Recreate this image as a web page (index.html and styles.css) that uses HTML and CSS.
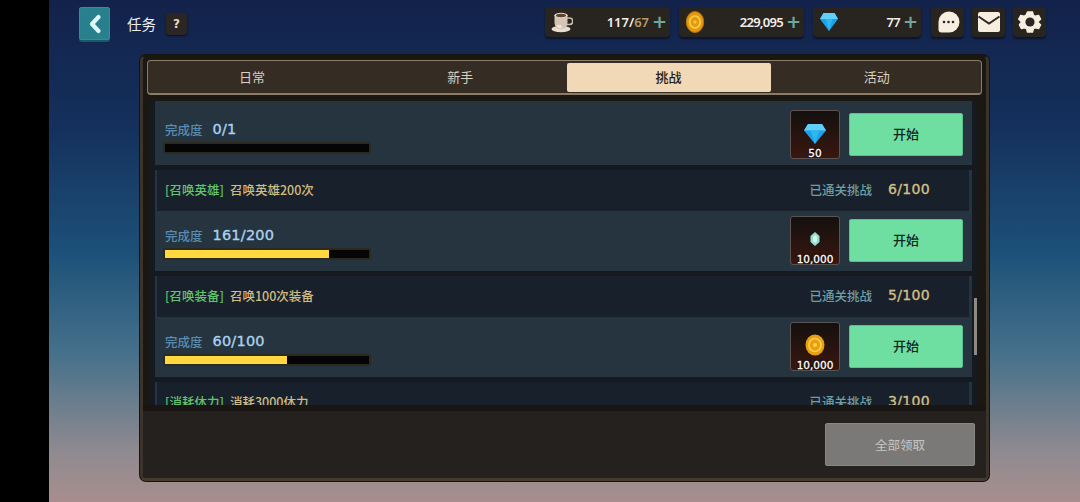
FILE: index.html
```html
<!DOCTYPE html>
<html lang="zh">
<head>
<meta charset="utf-8">
<title>任务</title>
<link rel="stylesheet" href="styles.css">
</head>
<body>
<div class="screen">
  <header class="top">
    <button class="back"><svg width="16" height="20" viewBox="0 0 16 20"><path d="M11.500 3 5 10l6.500 7" fill="none" stroke="#dff7f7" stroke-width="4.200" stroke-linecap="round" stroke-linejoin="round"/></svg></button>
    <span class="title">任务</span>
    <span class="help">?</span>
    <div class="spacer"></div>
    <div class="res res-a">
      <svg class="res-ic" width="22" height="22" viewBox="0 0 22 22"><ellipse cx="10" cy="18" rx="9.500" ry="3.200" fill="#e6dcd0"/><path d="M16 7h2.500a2.500 2.500 0 0 1 0 6.500H15" fill="none" stroke="#cbbcae" stroke-width="1.600"/><path d="M3.500 4h13v8a6 6 0 0 1-6 6h-1a6 6 0 0 1-6-6z" fill="#d4c4b6"/><path d="M5 14a5 5 0 0 0 5 3h1l-1-3z" fill="#efe6da"/><ellipse cx="10" cy="4.300" rx="6.500" ry="2.600" fill="#e2d6c9"/><ellipse cx="10" cy="4.500" rx="5" ry="1.700" fill="#5e3f30"/></svg>
      <span class="amt">117/<em>67</em></span><span class="plus">+</span>
    </div>
    <div class="res res-b">
      <svg class="res-ic" width="20" height="24" viewBox="0 0 20 24"><ellipse cx="10" cy="12" rx="8.700" ry="10.500" fill="#e39a10" stroke="#b87408"/><ellipse cx="10" cy="12" rx="5.200" ry="6" fill="none" stroke="#ffcf47" stroke-width="1.600"/><circle cx="10" cy="12" r="1.600" fill="#ffcf47"/></svg>
      <span class="amt">229,095</span><span class="plus">+</span>
    </div>
    <div class="res res-c">
      <svg class="res-ic" width="20" height="22" viewBox="0 0 20 22"><path d="M4.500 2h11L19 8 10 20 1 8z" fill="#1f9fe8"/><path d="M4.500 2h11L19 8H1z" fill="#5fd0fa"/><path d="M6.500 8h7L10 20z" fill="#2db6f2"/></svg>
      <span class="amt">77</span><span class="plus">+</span>
    </div>
    <button class="sq"><svg width="24" height="24" viewBox="0 0 24 24"><path d="M13 1.500a10.500 10.500 0 0 1 0 21H5.500C3.500 22.500 2.500 21.500 2.500 19.500V12A10.500 10.500 0 0 1 13 1.500z" fill="#f7eedf"/><circle cx="8" cy="12" r="1.300" fill="#2a2624"/><circle cx="12.500" cy="12" r="1.300" fill="#2a2624"/><circle cx="17" cy="12" r="1.300" fill="#2a2624"/></svg></button>
    <button class="sq"><svg width="24" height="22" viewBox="0 0 24 22"><rect x="1" y="1" width="22" height="20" rx="2" fill="#f7eedf"/><path d="M1.500 5.500 12 12.500l10.500-7" fill="none" stroke="#2a2624" stroke-width="2"/></svg></button>
    <button class="sq"><svg width="24" height="24" viewBox="0 0 24 24"><path d="M9.500 2h5l.8 3.200 2 1.100 3.200-.9 2 3.800-2.400 2.300v1l2.400 2.300-2 3.800-3.200-.9-2 1.100-.8 3.200h-5l-.8-3.200-2-1.100-3.200.9-2-3.800L3.200 12.500v-1L.8 9.200l2-3.800 3.200.9 2-1.100z" fill="#f7eedf" stroke="#f7eedf" stroke-width="1.500" stroke-linejoin="round"/><circle cx="12" cy="12" r="4.600" fill="#2a2624"/></svg></button>
  </header>

  <main class="panel">
    <nav class="tabs">
      <span class="tab">日常</span>
      <span class="tab">新手</span>
      <span class="tab on">挑战</span>
      <span class="tab">活动</span>
    </nav>
    <div class="list">
      <div class="rows">
        <section class="row first">
          <div class="body">
            <div class="prog">
              <div class="prog-t"><span class="lab">完成度</span><span class="val">0/1</span></div>
              <div class="bar"><i class="fill" style="width:0%"></i></div>
            </div>
            <div class="reward"><svg width="24" height="26" viewBox="0 0 24 24"><path d="M5 3h14l4 6.500L12 23 1 9.500z" fill="#1f9fe8"/><path d="M5 3h14l4 6.500H1z" fill="#5fd0fa"/><path d="M7.500 9.500h9L12 23z" fill="#2db6f2"/></svg><span class="qty">50</span></div>
            <button class="go">开始</button>
          </div>
        </section>
        <section class="row">
          <div class="head"><span class="cat">[召唤英雄]</span><span class="name">召唤英雄200次</span><span class="cleared">已通关挑战</span><span class="count">6/100</span></div>
          <div class="body">
            <div class="prog">
              <div class="prog-t"><span class="lab">完成度</span><span class="val">161/200</span></div>
              <div class="bar"><i class="fill" style="width:80.500%"></i></div>
            </div>
            <div class="reward"><svg width="10" height="14" viewBox="0 0 10 14"><path d="M5 0l4.500 4v6L5 14 .5 10V4z" fill="#8fe0cc"/><path d="M5 3l2 2v4l-2 2-2-2V5z" fill="#d6f7ee"/></svg><span class="qty">10,000</span></div>
            <button class="go">开始</button>
          </div>
        </section>
        <section class="row">
          <div class="head"><span class="cat">[召唤装备]</span><span class="name">召唤100次装备</span><span class="cleared">已通关挑战</span><span class="count">5/100</span></div>
          <div class="body">
            <div class="prog">
              <div class="prog-t"><span class="lab">完成度</span><span class="val">60/100</span></div>
              <div class="bar"><i class="fill" style="width:60%"></i></div>
            </div>
            <div class="reward"><svg width="20" height="22" viewBox="0 0 20 22"><ellipse cx="10" cy="11" rx="9.500" ry="10.500" fill="#e8a012"/><ellipse cx="10" cy="11" rx="6" ry="6.500" fill="none" stroke="#ffd04a" stroke-width="1.600"/><circle cx="10" cy="11" r="2" fill="#ffd04a"/></svg><span class="qty">10,000</span></div>
            <button class="go">开始</button>
          </div>
        </section>
        <section class="row">
          <div class="head"><span class="cat">[消耗体力]</span><span class="name">消耗3000体力</span><span class="cleared">已通关挑战</span><span class="count">3/100</span></div>
        </section>
      </div>
      <div class="thumb"></div>
    </div>
    <footer class="foot"><button class="claim">全部领取</button></footer>
  </main>
</div>
</body>
</html>
```
FILE: styles.css
```css
* { box-sizing: border-box; }
html, body { margin: 0; height: 100%; background: #000; overflow: hidden; }
body { font-family: "Noto Sans CJK SC", "Noto Sans", sans-serif; }
button { font: inherit; border: 0; padding: 0; margin: 0; }
.screen {
  margin-left: 49px; width: 1031px; height: 502px;
  display: flex; flex-direction: column; align-items: flex-start;
  background: linear-gradient(180deg, #13224a 0%, #14305c 25%, #1c5078 50%, #44708a 70%, #8f8a90 90%, #a88e8e 100%);
}
.top { display: flex; align-items: center; width: 967px; height: 44px; margin-left: 30px; flex: none; }
.back {
  width: 31px; height: 33px; border-radius: 3px; background: #27808c; margin-top: 3px;
  box-shadow: 0 2px 0 #185a68, inset 0 0 0 1px #2f8f9c;
  display: flex; align-items: center; justify-content: center;
}
.title { color: #eeeeee; font-size: 14.500px; margin-left: 17px; margin-top: 2px; }
.help {
  margin-left: 10px; margin-top: 3px; width: 21px; height: 22px; border-radius: 3px; background: #2b2624;
  color: #f0d9b8; font: bold 12px "DejaVu Sans", sans-serif; display: flex; align-items: center; justify-content: center;
  box-shadow: 0 1px 2px #0a1020;
}
.spacer { flex: 1; }
.res {
  height: 30px; background: #28241f; border-radius: 4px; box-shadow: 0 2px 2px #0b1430;
  display: flex; align-items: center; padding: 0 6px 0 6px; margin-right: 9px; color: #f3efe8;
  font: 600 13px "Noto Sans", sans-serif; letter-spacing: -.7px;
}
.res-a, .res-b { width: 125px; }
.res-a { letter-spacing: 0; }
.res-c { width: 108px; margin-right: 10px; }
.res-ic { flex: none; }
.amt { margin-left: auto; }
.amt em { font-style: normal; color: #b8996a; }
.plus { color: #6fa79c; font: bold 18px "DejaVu Sans", sans-serif; line-height: 1; width: 12px; margin-left: 3px; letter-spacing: 0; text-align: center; }
.sq {
  width: 33px; height: 30px; margin-right: 8px; border-radius: 4px; background: #28241f;
  box-shadow: 0 2px 2px #0b1430; display: flex; align-items: center; justify-content: center;
}
.sq:last-child { margin-right: 0; }
.panel {
  margin: 11px 0 0 91px; width: 849px; height: 426px; padding: 3px 4px 0 4px; flex: none;
  background: #1b1814; border-style: solid; border-width: 2px 3px 3px 3px; border-color: #1a1612 #3c342a #443b2f #3c342a; border-radius: 6px;
  box-shadow: 0 0 0 1px #17130f;
  display: flex; flex-direction: column;
}
.tabs {
  height: 35px; flex: none; display: grid; grid-template-columns: repeat(4, 1fr); column-gap: 4px;
  align-items: center; padding: 2px;
  background: #352c24; border: 1px solid #8b7c68; border-bottom-width: 2px; border-radius: 4px;
}
.tab { color: #d8d0c2; font-size: 13px; text-align: center; height: 29px; line-height: 27px; border-radius: 2px; }
.tab.on { background: #f1d9b8; color: #221d18; font-weight: 500; }
.list { position: relative; height: 304px; margin: 6px 0 0 3px; width: 827px; overflow: hidden; background: #141a20; flex: none; }
.rows { display: flex; flex-direction: column; gap: 5px; padding: 0 5px 0 5px; }
.row { background: #26343f; height: 101px; flex: none; }
.row.first { height: 64px; padding-top: 4px; }
.head {
  height: 41px; margin: 0 3px 0 2px; background: #18212b; display: flex; align-items: center; padding: 0 0 3px 8px; font-size: 12.500px; font-weight: 500;
}
.cat { color: #62c46c; margin-right: 6px; }
.name { color: #d0bb80; }
.cleared { margin-left: auto; color: #6f9ea3; }
.count { color: #d4bf85; font: 14px "DejaVu Sans", sans-serif; -webkit-text-stroke: .35px #d4bf85; letter-spacing: .3px; width: 97px; padding-left: 16px; }
.body { height: 60px; display: flex; align-items: center; padding: 0 9px 1px 8px; }
.prog { flex: 1; padding-top: 4px; }
.prog-t { display: flex; align-items: center; height: 20px; }
.lab { color: #5a8cb2; font-size: 12.500px; font-weight: 500; margin-left: 2px; }
.val { color: #a8d2ee; font: 14.500px "DejaVu Sans", sans-serif; -webkit-text-stroke: .35px #a8d2ee; letter-spacing: .2px; margin-left: 10px; }
.bar { width: 208px; height: 12px; margin-top: 3px; background: #060505; border: 2px solid #2c2a1e; border-radius: 2px; overflow: hidden; }
.fill { display: block; height: 100%; background: #ffd93f; }
.reward {
  width: 50px; height: 49px; margin-right: 9px; border-radius: 3px; position: relative;
  background: linear-gradient(180deg, #14100f, #3a1710); border: 1px solid #5c5450;
  display: flex; align-items: center; justify-content: center; padding-bottom: 3px;
}
.qty { position: absolute; left: -2px; right: -2px; bottom: -1px; text-align: center; color: #fff; font: 10.500px "DejaVu Sans", sans-serif; -webkit-text-stroke: .3px #fff; text-shadow: 0 0 2px #000, 0 0 2px #000; }
.go { width: 114px; height: 43px; padding-bottom: 2px; background: #6fdfa1; border: 1px solid #5ac08c; border-radius: 2px; color: #11261c; font-size: 13px; font-weight: 500; }
.thumb { position: absolute; right: 0; top: 197px; width: 3px; height: 57px; background: #8d8a86; }
.foot { flex: 1; display: flex; justify-content: flex-end; align-items: flex-start; padding: 12px 11px 0 0; margin: 0 -4px 0 -4px; background: #24211e; border-top: 6px solid #181512; border-radius: 0 0 4px 4px; }
.claim { width: 150px; height: 43px; background: #7b7977; border: 1px solid #8a8886; border-radius: 2px; color: #c7c6c3; font-size: 12.500px; }
```
